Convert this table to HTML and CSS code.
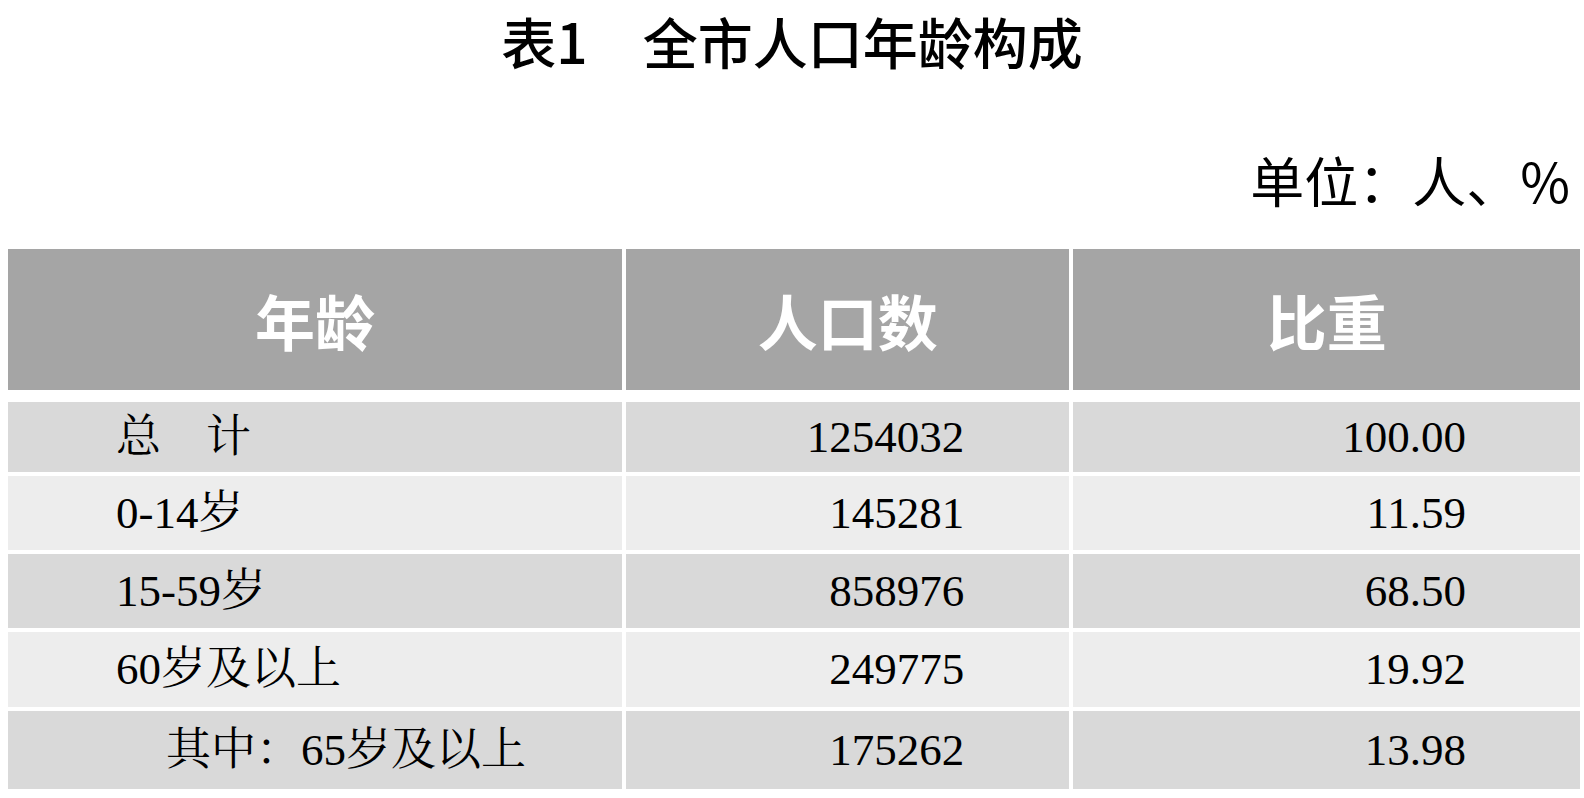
FILE: index.html
```html
<!DOCTYPE html>
<html lang="zh-CN">
<head>
<meta charset="utf-8">
<title>表1 全市人口年龄构成</title>
<link rel="stylesheet" href="styles.css">
</head>
<body>
<h1 class="title">表1　全市人口年龄构成</h1>
<div class="unit">单位：人、%</div>
<table class="stats">
  <thead>
    <tr class="head">
      <th class="c1">年龄</th>
      <th class="c2">人口数</th>
      <th class="c3">比重</th>
    </tr>
  </thead>
  <tbody>
    <tr class="spacer"><td></td><td></td><td></td></tr>
    <tr class="row dark r1">
      <td class="label">总　计</td>
      <td class="num n2">1254032</td>
      <td class="num n3">100.00</td>
    </tr>
    <tr class="row light r2">
      <td class="label">0-14岁</td>
      <td class="num n2">145281</td>
      <td class="num n3">11.59</td>
    </tr>
    <tr class="row dark r3">
      <td class="label">15-59岁</td>
      <td class="num n2">858976</td>
      <td class="num n3">68.50</td>
    </tr>
    <tr class="row light r4">
      <td class="label">60岁及以上</td>
      <td class="num n2">249775</td>
      <td class="num n3">19.92</td>
    </tr>
    <tr class="row dark r5">
      <td class="label sub">其中：65岁及以上</td>
      <td class="num n2">175262</td>
      <td class="num n3">13.98</td>
    </tr>
  </tbody>
</table>
</body>
</html>
```
FILE: styles.css
```css
html, body {
  margin: 0;
  padding: 0;
  background: #ffffff;
  overflow: hidden;
}

body {
  width: 1584px;
  height: 798px;
  font-family: "Noto Sans CJK SC", "Noto Sans", sans-serif;
  color: #000;
}

.title {
  margin: 0;
  padding-top: 0;
  font-size: 55px;
  line-height: normal;
  height: 78px;
  font-weight: 500;
  text-align: center;
}

.unit {
  margin-top: 75px;
  padding-right: 14px;
  font-size: 54px;
  line-height: 54px;
  text-align: right;
}

.stats {
  margin-top: 38px;
  margin-left: 4px;
  border-collapse: separate;
  border-spacing: 4px;
  table-layout: fixed;
}

.stats .c1 { width: 616px; }
.stats .c2 { width: 444px; }
.stats .c3 { width: 508px; }

.head th {
  height: 141px;
  padding: 0;
  background: #a5a5a5;
  color: #ffffff;
  font-family: "Noto Sans CJK SC", sans-serif;
  font-weight: 700;
  font-size: 60px;
  line-height: 1;
  text-align: center;
  vertical-align: middle;
}

.spacer td {
  height: 4px;
  padding: 0;
  font-size: 0;
  line-height: 0;
  background: #ffffff;
}

.row td {
  padding: 0;
  font-family: "Liberation Serif", "Noto Serif CJK SC", "Noto Sans CJK SC", serif;
  font-size: 45px;
  line-height: 1;
  font-weight: 400;
  vertical-align: middle;
  color: #000;
}

.row.dark td { background: #d9d9d9; }
.row.light td { background: #ededed; }

.r1 td { height: 70px; }
.r2 td { height: 74px; }
.r3 td { height: 74px; }
.r4 td { height: 75px; }
.r5 td { height: 78px; }

.label {
  padding-left: 108px !important;
  text-align: left;
}

.label.sub {
  padding-left: 158px !important;
}

.num { text-align: right; }
.n2 { padding-right: 105px !important; }
.n3 { padding-right: 114px !important; }
```
